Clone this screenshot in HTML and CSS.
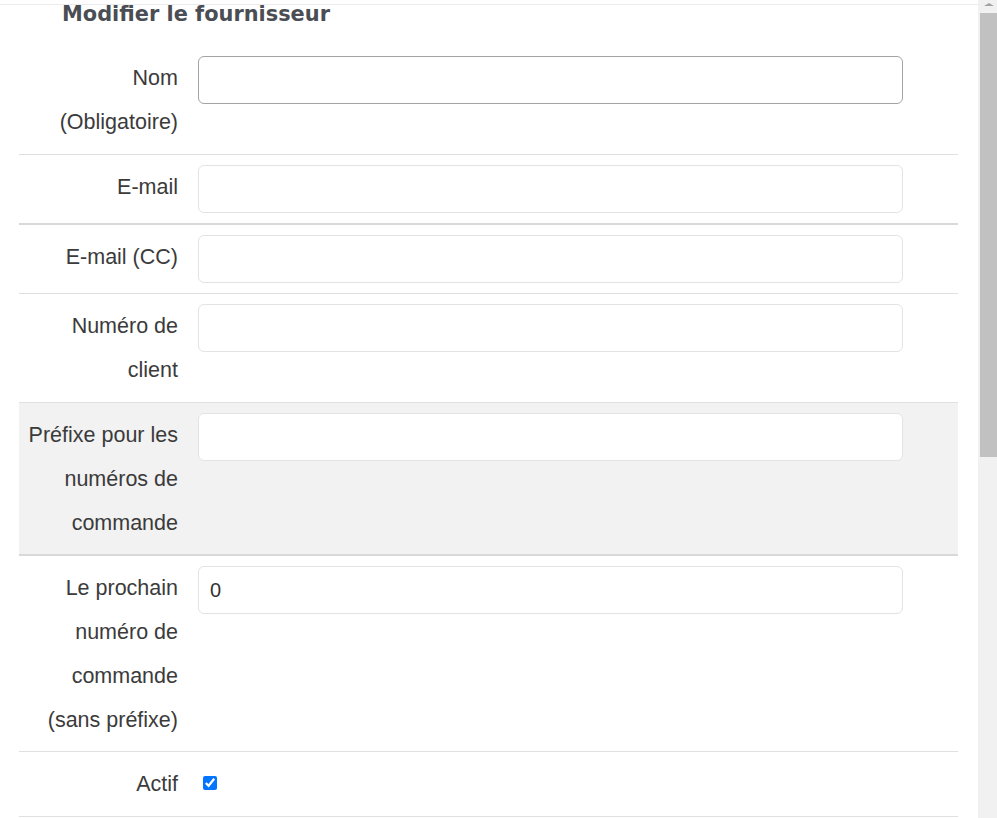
FILE: index.html
```html
<!DOCTYPE html>
<html lang="fr">

<head>
    <meta charset="UTF-8">
    <meta name="viewport" content="width=device-width, initial-scale=1.0">
    <title>Modifier le fournisseur</title>
    <link rel="stylesheet" href="styles.css">
</head>

<body>
    <div class="screen">
        <div class="main">
            <div class="topline"></div>
            <div class="header">
                <h2 class="title">Modifier le fournisseur</h2>
            </div>

            <form class="form">
                <div class="row">
                    <label class="label" for="nom">Nom (Obligatoire)</label>
                    <div class="field"><input class="input input-dark" id="nom" type="text"></div>
                </div>
                <div class="row row-thick">
                    <label class="label" for="email">E-mail</label>
                    <div class="field"><input class="input" id="email" type="text"></div>
                </div>
                <div class="row">
                    <label class="label" for="emailcc">E-mail (CC)</label>
                    <div class="field"><input class="input" id="emailcc" type="text"></div>
                </div>
                <div class="row">
                    <label class="label" for="client">Numéro de client</label>
                    <div class="field"><input class="input" id="client" type="text"></div>
                </div>
                <div class="row row-thick row-grey">
                    <label class="label" for="prefixe">Préfixe pour les numéros de commande</label>
                    <div class="field"><input class="input" id="prefixe" type="text"></div>
                </div>
                <div class="row row-long">
                    <label class="label" for="prochain">Le prochain numéro de commande (sans préfixe)</label>
                    <div class="field"><input class="input" id="prochain" type="text" value="0"></div>
                </div>
                <div class="row row-check">
                    <label class="label" for="actif">Actif</label>
                    <div class="field"><input class="check" id="actif" type="checkbox" checked></div>
                </div>
            </form>
        </div>

        <div class="scrollbar">
            <div class="scroll-arrow"></div>
            <div class="scroll-thumb"></div>
        </div>
    </div>
</body>

</html>
```

FILE: styles.css
```css
* {
    padding: 0;
    margin: 0;
    box-sizing: border-box;
}

body {
    background-color: #fff;
    font-family: "Liberation Sans", Arial, sans-serif;
    color: #3b3b3b;
    overflow: hidden;
}

.screen {
    display: flex;
    height: 818px;
}

.main {
    flex: 1;
    overflow: hidden;
}

.topline {
    height: 5px;
    border-bottom: 1px solid #ececec;
}

.header {
    height: 41px;
    padding-left: 62px;
}

.title {
    font-family: "DejaVu Sans", Verdana, sans-serif;
    font-size: 20.9px;
    font-weight: bold;
    line-height: 19px;
    color: #4a4e54;
}

.form {
    width: 939px;
    margin-left: 19px;
}

.row {
    display: grid;
    grid-template-columns: 169px 1fr;
    border-bottom: 1px solid #e0e0e0;
}

.row-thick {
    border-bottom: 2px solid #d9d9d9;
}

.row-grey {
    background-color: #f2f2f2;
}

.row-grey .label,
.row-long .label {
    padding-bottom: 9px;
}

.row-check {
    align-items: center;
}

.label {
    padding: 10px 10px 10px 6px;
    text-align: right;
    font-size: 21.5px;
    line-height: 44px;
}

.field {
    padding: 10px;
}

.input {
    display: block;
    width: 705px;
    height: 48px;
    border: 1px solid #e3e3e3;
    border-radius: 6px;
    background-color: #fff;
    padding: 0 11px;
    font-family: "Liberation Sans", Arial, sans-serif;
    font-size: 20px;
    color: #333;
    outline: none;
}

.input-dark {
    border-color: #a3a3a3;
}

.check {
    display: block;
    width: 14px;
    height: 14px;
    margin: 0 0 3px 5px;
    accent-color: #0075ff;
}

.scrollbar {
    width: 19px;
    background-color: #f1f1f1;
    padding-left: 2px;
}

.scroll-arrow {
    width: 0;
    height: 0;
    margin: 3px 0 0 4px;
    border-left: 5px solid transparent;
    border-right: 5px solid transparent;
    border-bottom: 3px solid #a3a3a3;
}

.scroll-thumb {
    height: 444px;
    margin-top: 7px;
    background-color: #c1c1c1;
}
```
